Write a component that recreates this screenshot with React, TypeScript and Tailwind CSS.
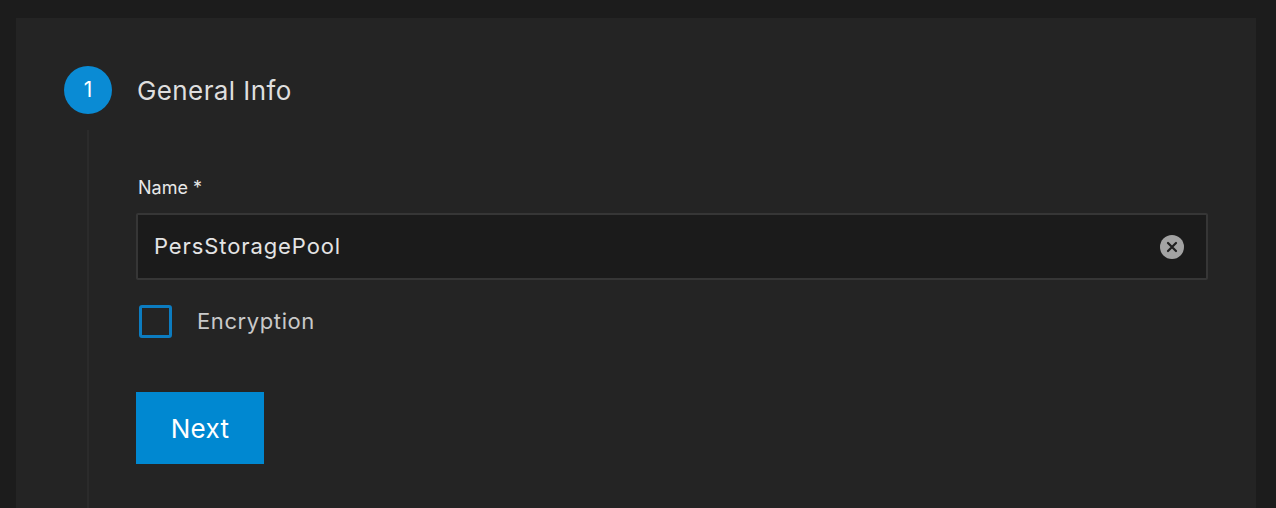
import React, { useState } from 'react';

export default function App() {
  const [name, setName] = useState('PersStoragePool');
  const [encrypt, setEncrypt] = useState(false);

  return (
    <div className="h-[508px] overflow-hidden bg-[#1c1c1c] pt-[18px] pl-4 pr-5 font-['Inter',sans-serif]">
      <div className="h-full bg-[#242424] pl-12 pr-12 pt-12">
        {/* step header */}
        <div className="flex items-center gap-[25px]">
          <div className="w-12 h-12 rounded-full bg-[#0a8bd4] text-white text-[21px] flex items-center justify-center">
            1
          </div>
          <h2 className="text-[26px] text-[#dedede] tracking-[0.4px]">General Info</h2>
        </div>

        {/* step body with connector line */}
        <div className="flex h-full">
          <div className="w-12 flex justify-center pt-4">
            <div className="w-[2px] h-full bg-[#2b2b2b]" />
          </div>
          <div className="flex-1 pl-[24px] pt-[60px]">
            <label className="block text-[18px] text-[#e8e8e8] mb-[12px] ml-[2px]">Name *</label>
            <div className="flex items-center h-[67px] bg-[#1b1b1b] border-2 border-[#363636] rounded-[2px] pl-[16px] pr-[22px]">
              <input
                value={name}
                onChange={e => setName(e.target.value)}
                className="flex-1 bg-transparent outline-none text-[22px] tracking-[0.9px] text-[#e4e4e4]"
              />
              <button
                type="button"
                onClick={() => setName('')}
                className="w-6 h-6 rounded-full bg-[#a3a3a3] flex items-center justify-center"
              >
                <svg width="12" height="12" viewBox="0 0 12 12">
                  <path d="M2 2 L10 10 M10 2 L2 10" stroke="#1f1f1f" strokeWidth="2.2" strokeLinecap="round" />
                </svg>
              </button>
            </div>

            <label className="flex items-center gap-[25px] mt-[25px] cursor-pointer">
              <span
                onClick={() => setEncrypt(!encrypt)}
                className={`w-[33px] h-[33px] ml-[3px] rounded-[3px] border-[3px] border-[#0c7cc0] ${encrypt ? 'bg-[#0c7cc0]' : ''}`}
              />
              <span className="text-[22px] tracking-[0.6px] text-[#c9c9c9]">Encryption</span>
            </label>

            <button
              type="button"
              className="mt-[54px] w-[128px] h-[72px] bg-[#0088d1] text-white text-[26px] tracking-[0.3px]"
            >
              Next
            </button>
          </div>
        </div>
      </div>
    </div>
  );
}
